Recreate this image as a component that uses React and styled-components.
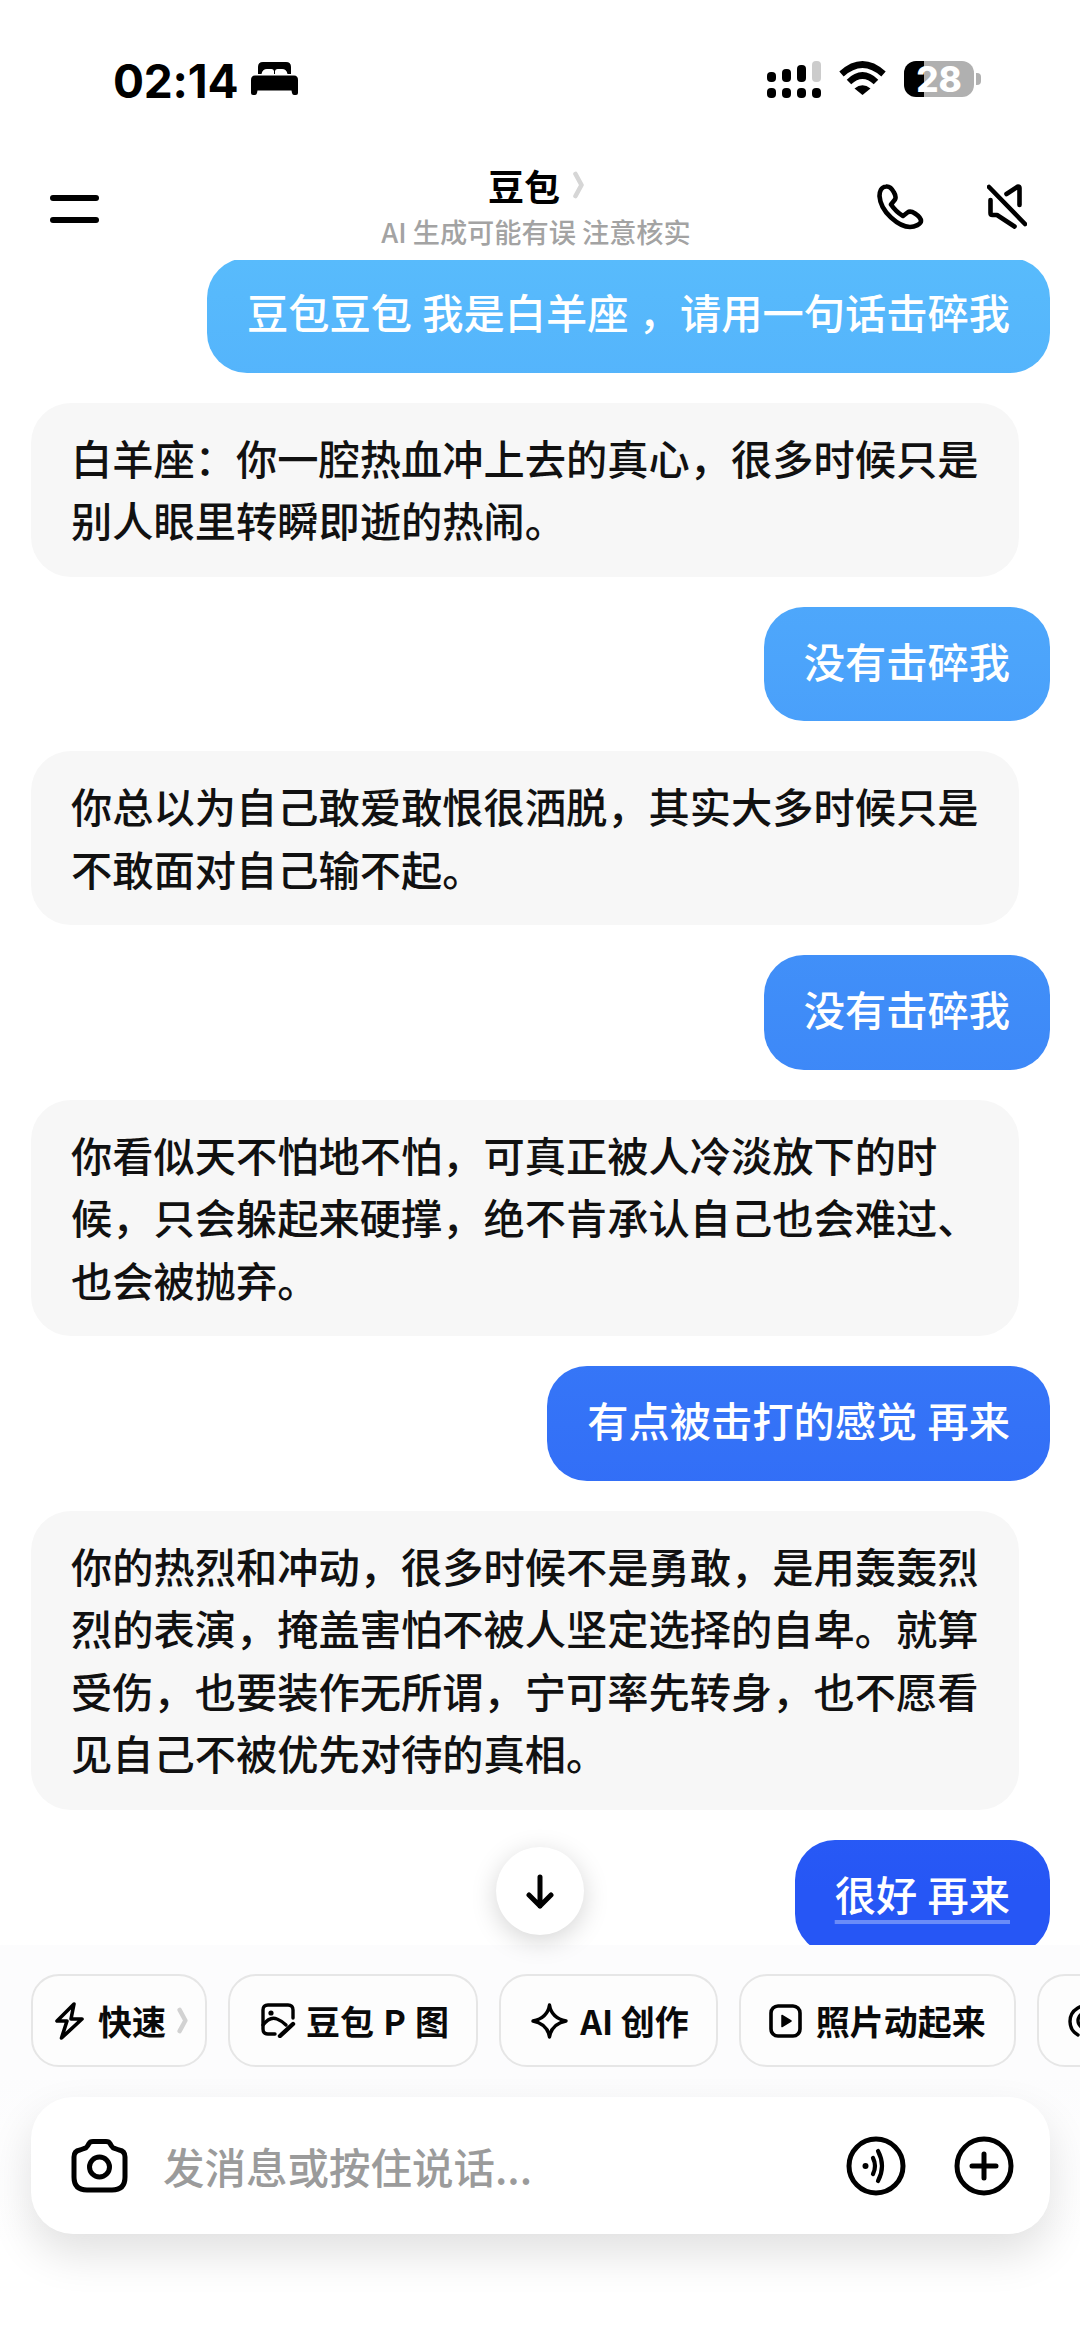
import React from 'react'
import styled, { createGlobalStyle } from 'styled-components'

const GlobalStyle = createGlobalStyle`
  html, body {
    margin: 0;
    padding: 0;
    background: #ffffff;
  }
  * {
    box-sizing: border-box;
  }
`

const CJK = `"Noto Sans CJK SC", "Noto Sans", sans-serif`

const Shell = styled.div`
  width: 1080px;
  height: 2347px;
  display: flex;
  flex-direction: column;
  overflow: hidden;
  background: #ffffff;
  font-family: ${CJK};
`

/* status bar */
const StatusBar = styled.div`
  height: 120px;
  flex: none;
  display: flex;
  justify-content: space-between;
  padding: 62px 99px 0 113px;
`

const StatusLeft = styled.div`
  display: flex;
  align-items: flex-start;
  gap: 13px;
  height: 37px;
`

const Clock = styled.span`
  font-family: Inter, "Liberation Sans", sans-serif;
  font-weight: 700;
  font-size: 46px;
  line-height: 38px;
  color: #000000;
  letter-spacing: -0.2px;
`

const StatusRight = styled.div`
  display: flex;
  align-items: flex-start;
  gap: 18px;
  margin-top: -1px;
`

const Signal = styled.div`
  display: grid;
  grid-template-columns: repeat(4, 9px);
  column-gap: 6px;
  row-gap: 6px;
  grid-template-rows: 21px 10px;
  align-items: end;
`

const SignalBar = styled.i`
  display: block;
  height: ${p => p.$h}px;
  border-radius: 4px;
  background: ${p => (p.$off ? '#cccccc' : '#000000')};
`

const Battery = styled.div`
  position: relative;
  width: 70px;
  height: 36px;
  border-radius: 12px;
  background: linear-gradient(90deg, #000000 20px, #b0b0b0 20px);
  color: #ffffff;
  font-family: Inter, "Liberation Sans", sans-serif;
  font-weight: 800;
  font-size: 35px;
  line-height: 36px;
  text-align: center;
  margin-right: 7px;

  &::after {
    content: '';
    position: absolute;
    right: -7px;
    top: 12px;
    width: 5px;
    height: 12px;
    border-radius: 0 4px 4px 0;
    background: #b0b0b0;
  }
`

/* nav header */
const Header = styled.header`
  height: 140px;
  flex: none;
  display: grid;
  grid-template-columns: 1fr auto 1fr;
  background: #ffffff;
  position: relative;
  z-index: 2;
`

const MenuButton = styled.div`
  width: 49px;
  margin: 75px 0 0 50px;
  display: flex;
  flex-direction: column;
  gap: 16px;

  i {
    display: block;
    height: 6px;
    border-radius: 3px;
    background: #000000;
  }
`

const TitleBlock = styled.div`
  display: flex;
  flex-direction: column;
  align-items: center;
  padding: 43px 8px 0 0;
`

const TitleRow = styled.div`
  display: flex;
  align-items: center;
  gap: 13px;
  height: 44px;
  color: #000000;
  font-weight: 700;
  font-size: 36px;
`

const Subtitle = styled.div`
  margin-top: 5px;
  font-size: 27.2px;
  line-height: 38px;
  color: #a3a3a3;
  font-weight: 500;
  white-space: pre;
`

const HeaderActions = styled.div`
  display: flex;
  justify-content: flex-end;
  align-items: flex-start;
  gap: 63px;
  padding: 64px 53px 0 0;
`

/* messages */
const Chat = styled.main`
  flex: 1;
  min-height: 0;
  overflow: hidden;
  display: flex;
  flex-direction: column;
  gap: 30px;
  padding: 0 30px 0 31px;
`

const Bubble = styled.div`
  flex: none;
  font-size: 41.25px;
  line-height: 62.5px;
  font-weight: 500;
  border-radius: 40px;
  width: fit-content;
  ${p =>
    p.$mine
      ? `
    align-self: flex-end;
    padding: 22px 40px 30px;
    color: #ffffff;
    white-space: pre;
    word-spacing: 1px;
    background: linear-gradient(180deg, #58bbfc 260px, #4ca4fb 660px, #3f8cf8 1010px, #3472f7 1425px, #2656f5 1890px) fixed;
  `
      : `
    align-self: flex-start;
    padding: 23px 40px 26px;
    max-width: 988px;
    color: #111111;
    background: #f7f7f7;
  `}
  &:first-child {
    margin-top: -2px;
  }
`

const Underlined = styled.span`
  text-decoration: underline;
  text-decoration-color: rgba(255, 255, 255, 0.32);
  text-decoration-thickness: 4px;
  text-underline-offset: 9px;
  text-decoration-skip-ink: none;
`

/* bottom dock */
const Dock = styled.footer`
  height: 402px;
  flex: none;
  position: relative;
  z-index: 3;
  background: linear-gradient(180deg, #fcfcfd 0, #fcfcfd 130px, #ffffff 300px);
  padding: 29px 0 0 31px;
`

const ScrollDown = styled.div`
  position: absolute;
  left: 496px;
  top: -98px;
  width: 88px;
  height: 88px;
  border-radius: 50%;
  background: #ffffff;
  box-shadow: 0 6px 26px rgba(0, 0, 0, 0.17);
  display: flex;
  align-items: center;
  justify-content: center;
`

const ChipRow = styled.div`
  display: flex;
  gap: 21px;
  overflow: hidden;
`

const Chip = styled.div`
  flex: none;
  height: 93px;
  display: flex;
  align-items: center;
  gap: ${p => p.$gap || 14}px;
  padding: 0 ${p => p.$right || 28}px 0 ${p => p.$left || 28}px;
  border: 2.5px solid #e6e6e6;
  border-radius: 28px;
  background: #fdfdfd;
  color: #0a0a0a;
  font-size: 34px;
  font-weight: 700;
  white-space: pre;
  word-spacing: ${p => p.$spread || 0}px;
`

const ChipChevron = styled.span`
  margin-left: -3px;
  display: flex;
`

const InputBar = styled.div`
  margin: 30px 30px 0 0;
  height: 137px;
  border-radius: 42px;
  background: #ffffff;
  box-shadow: 0 20px 44px rgba(0, 0, 0, 0.12);
  display: flex;
  align-items: center;
  padding: 0 36px 0 40px;
`

const Placeholder = styled.div`
  flex: 1;
  margin-left: 35px;
  font-size: 41.5px;
  font-weight: 500;
  color: #9b9b9b;
`

const InputActions = styled.div`
  display: flex;
  align-items: center;
  gap: 48px;
`

const Icon = styled.svg`
  display: block;
  flex: none;
  fill: none;
  stroke: #000000;
  stroke-linecap: round;
  stroke-linejoin: round;
`

const ChevronIcon = styled(Icon)`
  stroke: ${p => p.$color};
`

const Chevron = ({ w, h, color }) => (
  <ChevronIcon width={w} height={h} viewBox="0 0 11 28" strokeWidth="4.6" $color={color}>
    <path d="M2.5 3 L8.5 14 L2.5 25" />
  </ChevronIcon>
)

const BedIcon = () => (
  <svg width="47" height="33" viewBox="0 0 47 33" fill="#000000">
    <path d="M7 12 V5 Q7 0 12 0 H35 Q40 0 40 5 V12 H36.5 Q35.5 7 31 7 H26.5 Q24.5 7 24 9 V12 H23 V9 Q22.5 7 20.5 7 H16 Q11.5 7 10.5 12 Z" />
    <path d="M4 13.5 H43 Q47 13.5 47 18 V31 Q47 33 45 33 H43 Q41.5 33 41 31 L40.5 28.5 H6.5 L6 31 Q5.5 33 4 33 H2 Q0 33 0 31 V18 Q0 13.5 4 13.5 Z" />
  </svg>
)

const WifiIcon = () => (
  <svg width="47" height="34" viewBox="0 0 47 34" fill="none" stroke="#000000" strokeWidth="6.5">
    <path d="M2.5 13 Q23.5 -6 44.5 13" />
    <path d="M10 21 Q23.5 8 37 21" />
    <path d="M15.5 27.5 Q23.5 21 31.5 27.5 L23.5 34 Z" fill="#000000" stroke="none" />
  </svg>
)

const PhoneIcon = () => (
  <Icon width="47" height="46" viewBox="0 0 47 46" strokeWidth="4.6">
    <path d="M9 2.5 C4 3 2.5 8 2.5 12 C3 20 8 28 14 33.5 C20 39 27 43 33 43 C38 43 44 40 44 37 C44 34 41 31.5 38 29.5 C35 27.5 32.5 27 30.5 28.5 L26 32 C21 29 17 25 14 20.5 L18 15.5 C19 13.5 18.5 11 17 8.5 C15.5 5.5 13 2 9 2.5 Z" />
  </Icon>
)

const MuteIcon = () => (
  <Icon width="40" height="45" viewBox="0 0 40 45" strokeWidth="4.6">
    <path d="M19.5 10 L31 2.5 Q32.5 2.5 32.5 4 V21" />
    <path d="M3.5 16 V29 Q3.5 31 5.5 31 H10 L27.5 42.5" />
    <path d="M2 3 L38 40" />
  </Icon>
)

const ArrowDownIcon = () => (
  <Icon width="28" height="35" viewBox="0 0 28 35" strokeWidth="5">
    <path d="M14 3 V32 M3 21 L14 32 L25 21" />
  </Icon>
)

const BoltIcon = () => (
  <Icon width="29" height="38" viewBox="0 0 29 38" strokeWidth="3.6">
    <path d="M19 2 L2 19 H12 L6.5 36 L27 17 H16 Z" />
  </Icon>
)

const PhotoEditIcon = () => (
  <Icon width="36" height="35" viewBox="0 0 36 35" strokeWidth="3.4">
    <path d="M33 15 V7 Q33 2 28 2 H8 Q3 2 3 7 V26 Q3 31 8 31 H15" />
    <circle cx="11" cy="10" r="2.6" fill="#000000" stroke="none" />
    <path d="M3 22 Q10 13 17 16 Q22 18 26 22" />
    <path d="M20 33 L33 21" strokeWidth="4.4" />
  </Icon>
)

const SparkleIcon = () => (
  <Icon width="37" height="36" viewBox="0 0 37 36" strokeWidth="3.4">
    <path d="M18.5 2 Q20.5 15 35 18 Q20.5 21 18.5 34 Q16.5 21 2 18 Q16.5 15 18.5 2 Z" />
  </Icon>
)

const PlayIcon = () => (
  <Icon width="33" height="34" viewBox="0 0 33 34" strokeWidth="3.6">
    <rect x="2" y="2" width="29" height="30" rx="7" />
    <path d="M13 11.5 L22 17 L13 22.5 Z" fill="#000000" strokeWidth="1.5" />
  </Icon>
)

const RingsIcon = () => (
  <Icon width="36" height="36" viewBox="0 0 36 36" strokeWidth="3.4">
    <path d="M10 32 A15.5 15.5 0 1 1 33 18" />
    <path d="M15 25 A8 8 0 1 1 26 18" />
  </Icon>
)

const CameraIcon = () => (
  <Icon width="57" height="54" viewBox="0 0 57 54" strokeWidth="5">
    <path d="M3 18 Q3 12 9 11 L13 9.5 Q15.5 9 16.5 7 L18 4.5 Q19 2.5 22 2.5 H35 Q38 2.5 39 4.5 L40.5 7 Q41.5 9 44 9.5 L48 11 Q54 12 54 18 V38 Q54 51 41 51 H16 Q3 51 3 38 Z" />
    <circle cx="28.5" cy="28" r="10" />
  </Icon>
)

const VoiceIcon = () => (
  <Icon width="60" height="60" viewBox="0 0 60 60" strokeWidth="5">
    <circle cx="30" cy="30" r="27" />
    <circle cx="19.5" cy="30" r="3" fill="#000000" stroke="none" />
    <path d="M27 22 Q31 30 27 38" strokeWidth="4.2" />
    <path d="M32 15 Q40 30 32 45" strokeWidth="4.2" />
  </Icon>
)

const PlusIcon = () => (
  <Icon width="60" height="60" viewBox="0 0 60 60" strokeWidth="5">
    <circle cx="30" cy="30" r="27" />
    <path d="M30 18 V42 M18 30 H42" />
  </Icon>
)

const messages = [
  { mine: true, text: '豆包豆包 我是白羊座 ，请用一句话击碎我' },
  { text: '白羊座：你一腔热血冲上去的真心，很多时候只是别人眼里转瞬即逝的热闹。' },
  { mine: true, text: '没有击碎我' },
  { text: '你总以为自己敢爱敢恨很洒脱，其实大多时候只是不敢面对自己输不起。' },
  { mine: true, text: '没有击碎我' },
  { text: '你看似天不怕地不怕，可真正被人冷淡放下的时候，只会躲起来硬撑，绝不肯承认自己也会难过、也会被抛弃。' },
  { mine: true, text: '有点被击打的感觉 再来' },
  { text: '你的热烈和冲动，很多时候不是勇敢，是用轰轰烈烈的表演，掩盖害怕不被人坚定选择的自卑。就算受伤，也要装作无所谓，宁可率先转身，也不愿看见自己不被优先对待的真相。' },
  { mine: true, underline: true, text: '很好 再来' },
]

export default function App() {
  return (
    <Shell>
      <GlobalStyle />
      <StatusBar>
        <StatusLeft>
          <Clock>02:14</Clock>
          <BedIcon />
        </StatusLeft>
        <StatusRight>
          <Signal>
            <SignalBar $h={10} />
            <SignalBar $h={13} />
            <SignalBar $h={17} />
            <SignalBar $h={21} $off />
            <SignalBar $h={10} />
            <SignalBar $h={10} />
            <SignalBar $h={10} />
            <SignalBar $h={10} />
          </Signal>
          <WifiIcon />
          <Battery>28</Battery>
        </StatusRight>
      </StatusBar>

      <Header>
        <MenuButton>
          <i />
          <i />
        </MenuButton>
        <TitleBlock>
          <TitleRow>
            豆包
            <Chevron w={11} h={28} color="#d6d6d6" />
          </TitleRow>
          <Subtitle>AI 生成可能有误 注意核实</Subtitle>
        </TitleBlock>
        <HeaderActions>
          <PhoneIcon />
          <MuteIcon />
        </HeaderActions>
      </Header>

      <Chat>
        {messages.map((m, i) => (
          <Bubble key={i} $mine={m.mine}>
            {m.underline ? <Underlined>{m.text}</Underlined> : m.text}
          </Bubble>
        ))}
      </Chat>

      <Dock>
        <ScrollDown>
          <ArrowDownIcon />
        </ScrollDown>
        <ChipRow>
          <Chip $left={22} $right={17} $gap={14}>
            <BoltIcon />
            快速
            <ChipChevron>
              <Chevron w={11} h={27} color="#d2d2d2" />
            </ChipChevron>
          </Chip>
          <Chip $left={30} $right={27} $gap={10} $spread={1.5}>
            <PhotoEditIcon />
            豆包 P 图
          </Chip>
          <Chip $left={30} $right={27} $gap={12}>
            <SparkleIcon />
            AI 创作
          </Chip>
          <Chip>
            <PlayIcon />
            照片动起来
          </Chip>
          <Chip $left={29}>
            <RingsIcon />
          </Chip>
        </ChipRow>
        <InputBar>
          <CameraIcon />
          <Placeholder>发消息或按住说话...</Placeholder>
          <InputActions>
            <VoiceIcon />
            <PlusIcon />
          </InputActions>
        </InputBar>
      </Dock>
    </Shell>
  )
}
